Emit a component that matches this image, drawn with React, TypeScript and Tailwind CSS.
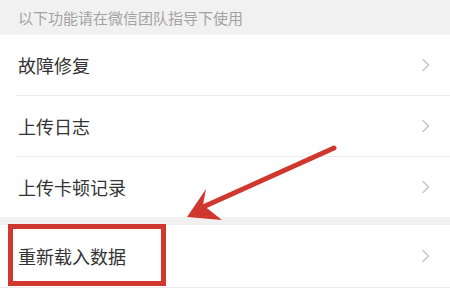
import React from "react";

const FONT = { fontFamily: '"Noto Sans CJK SC", "Liberation Sans", sans-serif' };

function Chevron() {
  return (
    <svg width="10" height="14" viewBox="0 0 10 14" fill="none">
      <path d="M2 1.5L7.5 7L2 12.5" stroke="#c4c4c4" strokeWidth="1.4" strokeLinecap="round" strokeLinejoin="round" />
    </svg>
  );
}

function Row(props: { label: string; divider?: boolean; height?: string }) {
  const { label, divider, height = "h-[60px]" } = props;
  return (
    <div className="bg-white">
      <div className={`flex ${height} items-center justify-between pl-[18px] pr-[19px]`}>
        <span className="text-[18px] leading-none text-[#333]">{label}</span>
        <Chevron />
      </div>
      {divider && <div className="ml-[16px] h-px bg-[#ececec]" />}
    </div>
  );
}

export default function App() {
  return (
    <div className="relative h-[289px] w-[450px] overflow-hidden bg-white" style={FONT}>
      {/* 상단 안내 */}
      <div className="flex h-[35px] items-center bg-[#f1f1f1] pl-[18px]">
        <span className="text-[15px] leading-none text-[#a3a3a3]">以下功能请在微信团队指导下使用</span>
      </div>

      <Row label="故障修复" divider />
      <Row label="上传日志" divider />
      <Row label="上传卡顿记录" />

      <div className="h-[8px] bg-[#f1f1f1]" />

      <Row label="重新载入数据" height="h-[62px]" />
      <div className="h-px bg-[#ececec]" />

      {/* 빨간 강조 박스 + 화살표 */}
      <div className="absolute left-[8px] top-[224px] h-[62px] w-[158px] border-[5px] border-[#d0382f]" />
      <svg className="absolute left-0 top-0" width="450" height="289" viewBox="0 0 450 289">
        <line x1="334" y1="148" x2="203" y2="207" stroke="#d0382f" strokeWidth="5" strokeLinecap="round" />
        <polygon points="187,217 206,189 203,205 222,220" fill="#d0382f" />
      </svg>
    </div>
  );
}
